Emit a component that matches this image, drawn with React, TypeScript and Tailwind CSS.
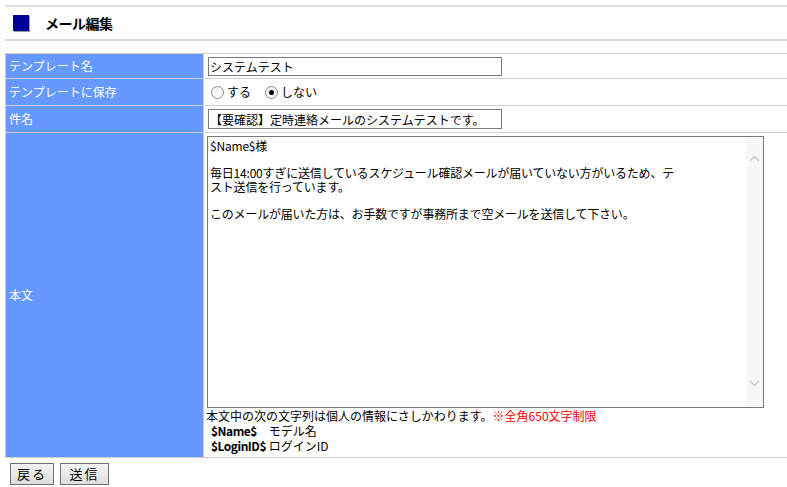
const font = { fontFamily: '"Noto Sans CJK JP", "Noto Sans", sans-serif' };

const Radio = ({ checked, label }: { checked?: boolean; label: string }) => (
  <label className="flex items-center gap-[3px]">
    <span className="w-[13px] h-[13px] rounded-full border border-[#8a8a8a] bg-gradient-to-b from-[#f4f4f4] to-white flex items-center justify-center">
      {checked && <span className="w-[5px] h-[5px] rounded-full bg-black" />}
    </span>
    <span>{label}</span>
  </label>
);

const Chevron = ({ up }: { up?: boolean }) => (
  <svg width="11" height="7" viewBox="0 0 11 7" className="block">
    <path d={up ? 'M1 6 L5.5 1.5 L10 6' : 'M1 1 L5.5 5.5 L10 1'} fill="none" stroke="#c8c8c8" strokeWidth="1.4" />
  </svg>
);

const body = `$Name$様

毎日14:00すぎに送信しているスケジュール確認メールが届いていない方がいるため、テ
スト送信を行っています。

このメールが届いた方は、お手数ですが事務所まで空メールを送信して下さい。`;

export default function App() {
  return (
    <div className="w-[787px] h-[487px] overflow-hidden bg-white text-black text-[12px]" style={font}>
      <div className="w-[800px] pl-[5px] pt-[5px]">
        {/* header */}
        <div className="h-[36px] border-t-2 border-b-2 border-[#dcdcdc] flex items-center">
          <div className="ml-[8px] w-[16px] h-[16px] bg-[#000099] shadow-[1px_1px_0_#9a9a9a]" />
          <h1 className="ml-[16px] text-[14px] font-bold tracking-[-0.5px]">メール編集</h1>
        </div>

        {/* form table */}
        <div className="mt-[12px] grid grid-cols-[197px_1fr] gap-px bg-[#cccccc] p-px">
          <div className="h-[24px] bg-[#6699ff] text-white flex items-center pl-[3px]">テンプレート名</div>
          <div className="bg-white flex items-center pl-[4px]">
            <input
              readOnly
              value="システムテスト"
              className="w-[294px] h-[19px] border border-[#7a7a7a] px-[1px] text-[12px] outline-none"
              style={font}
            />
          </div>

          <div className="h-[26px] bg-[#6699ff] text-white flex items-center pl-[3px]">テンプレートに保存</div>
          <div className="bg-white flex items-center pl-[7px] gap-[14px]">
            <Radio label="する" />
            <Radio checked label="しない" />
          </div>

          <div className="h-[26px] bg-[#6699ff] text-white flex items-center pl-[3px]">件名</div>
          <div className="bg-white flex items-center pl-[4px]">
            <input
              readOnly
              value="【要確認】定時連絡メールのシステムテストです。"
              className="w-[294px] h-[20px] border border-[#7a7a7a] px-[1px] text-[12px] outline-none"
              style={font}
            />
          </div>

          <div className="h-[324px] bg-[#6699ff] text-white flex items-center pl-[3px]">本文</div>
          <div className="bg-white pl-[3px] pt-[3px]">
            <div className="w-[557px] h-[272px] border border-[#7a7a7a] flex">
              <div className="flex-1 pl-[2px] pt-[2px] whitespace-pre-wrap leading-[13.5px] tracking-[-0.2px]">{body}</div>
              <div className="w-[17px] bg-[#f7f7f7] flex flex-col items-center justify-between pt-[18px] pb-[20px]">
                <Chevron up />
                <Chevron />
              </div>
            </div>
            <div className="leading-[15px] -ml-[1px]">
              <div>
                本文中の次の文字列は個人の情報にさしかわります。
                <span className="text-[#ff0000]">※全角650文字制限</span>
              </div>
              <div className="pl-[5px]">
                <span className="font-bold tracking-[-0.5px]">$Name$</span>　モデル名
              </div>
              <div className="pl-[5px]">
                <span className="font-bold tracking-[-0.5px]">$LoginID$</span> ログインID
              </div>
            </div>
          </div>
        </div>

        {/* buttons */}
        <div className="mt-[5px] ml-[5px] flex gap-[6px]">
          <button className="w-[44px] h-[22px] border border-[#707070] bg-gradient-to-b from-[#f4f4f4] to-[#dedede] text-[13px] tracking-[2px]" style={font}>
            戻る
          </button>
          <button className="w-[49px] h-[22px] border border-[#707070] bg-gradient-to-b from-[#f4f4f4] to-[#dedede] text-[13px] tracking-[2px]" style={font}>
            送信
          </button>
        </div>
      </div>
    </div>
  );
}
